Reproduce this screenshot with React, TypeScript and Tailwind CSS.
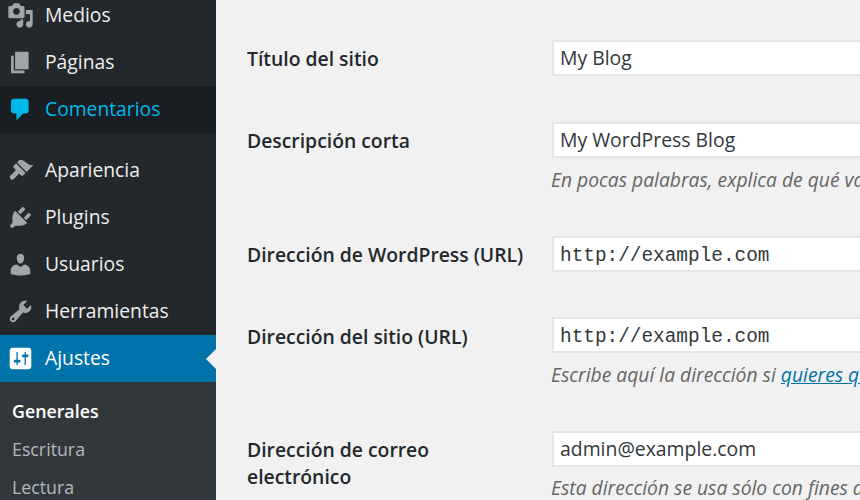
const FONT = "font-['Open_Sans','Noto_Sans',sans-serif]";

const ICONS: Record<string, string> = {
  media:
    "M13 11V4c0-.55-.45-1-1-1h-1.67L9 1H5L3.67 3H2c-.55 0-1 .45-1 1v7c0 .55.45 1 1 1h10c.55 0 1-.45 1-1zM7 4.5c1.38 0 2.5 1.12 2.5 2.5S8.38 9.5 7 9.5 4.5 8.38 4.5 7 5.62 4.5 7 4.5zM14 6h5v10.5c0 1.38-1.12 2.5-2.5 2.5S14 17.88 14 16.5s1.12-2.5 2.5-2.5c.17 0 .34.02.5.05V9h-3V6zm-4 8.05V13h2v3.5c0 1.38-1.12 2.5-2.5 2.5S7 17.88 7 16.5 8.12 14 9.5 14c.17 0 .34.02.5.05z",
  page: "M6 15V2h10v13H6zm-1 1h8v2H3V5h2v11z",
  comments: "M5 2h9c1.1 0 2 .9 2 2v7c0 1.1-.9 2-2 2h-2l-5 5v-5H5c-1.1 0-2-.9-2-2V4c0-1.1.9-2 2-2z",
  appearance:
    "M14.48 11.06L7.41 3.99l1.5-1.5c.5-.56 2.3-.47 3.51.32 1.21.8 1.43 1.28 2.91 2.1 1.18.64 2.45 1.26 4.45.85zm-.71.71L6.7 4.7 4.93 6.47c-.39.39-.39 1.02 0 1.41l1.06 1.06c.39.39.39 1.03 0 1.42l-3.4 3.4c-.69.69-.69 1.81 0 2.5.69.69 1.81.69 2.5 0l3.4-3.4c.3-.3.8-.3 1.1 0l.9.9c.39.39 1.02.39 1.41 0z",
  plugins:
    "M13.11 4.36L9.87 7.6 8 5.73l3.24-3.24c.35-.34 1.05-.2 1.56.32.52.51.66 1.21.31 1.55zm-8 1.77l.91-1.12 9.01 9.01-1.19.84c-.71.71-2.63 1.16-3.82 1.16H6.14L4.9 17.26c-.59.59-1.54.59-2.12 0-.59-.58-.59-1.53 0-2.12l1.24-1.24v-3.88c0-1.13.4-3.19 1.09-3.89zm7.26 3.97l3.24-3.24c.34-.35 1.04-.21 1.55.31.52.51.66 1.21.31 1.55l-3.24 3.25z",
  users:
    "M10 9.25c-2.27 0-2.73-3.44-2.73-3.44C7 4.02 7.82 2 9.97 2c2.16 0 2.98 2.02 2.71 3.81 0 0-.41 3.44-2.68 3.44zm0 2.57L12.72 10c2.39 0 4.52 2.33 4.52 4.53v2.49s-3.65 1.13-7.24 1.13c-3.65 0-7.24-1.13-7.24-1.13v-2.49c0-2.25 1.94-4.48 4.47-4.48z",
  tools:
    "M16.68 9.77c-1.34 1.34-3.3 1.67-4.95.99l-5.41 6.52c-.99.99-2.59.99-3.58 0s-.99-2.59 0-3.57l6.52-5.42c-.68-1.65-.35-3.61.99-4.95 1.28-1.28 3.12-1.62 4.72-1.06l-2.89 2.89 2.82 2.82 2.86-2.87c.53 1.58.18 3.39-1.08 4.65zM3.81 16.21c.4.39 1.04.39 1.43 0 .4-.4.4-1.04 0-1.43-.39-.4-1.03-.4-1.43 0-.39.39-.39 1.03 0 1.43z",
  settings:
    "M18 16V4c0-1.1-.9-2-2-2H4c-1.1 0-2 .9-2 2v12c0 1.1.9 2 2 2h12c1.1 0 2-.9 2-2zM8 11h1c.55 0 1 .45 1 1s-.45 1-1 1H8v1.5c0 .28-.22.5-.5.5s-.5-.22-.5-.5V13H6c-.55 0-1-.45-1-1s.45-1 1-1h1V5.5c0-.28.22-.5.5-.5s.5.22.5.5V11zm5-2h-1c-.55 0-1-.45-1-1s.45-1 1-1h1V5.5c0-.28.22-.5.5-.5s.5.22.5.5V7h1c.55 0 1 .45 1 1s-.45 1-1 1h-1v5.5c0 .28-.22.5-.5.5s-.5-.22-.5-.5V9z",
};

function MenuItem({ icon, label, state }: { icon: string; label: string; state?: "hover" | "current" }) {
  const rowClass =
    state === "current"
      ? "bg-[#0073aa] text-white"
      : state === "hover"
        ? "bg-[#191e23] text-[#00b9eb]"
        : "text-[#eeeeee]";
  const iconClass =
    state === "current" ? "text-white" : state === "hover" ? "text-[#00b9eb]" : "text-[#a0a5aa]";

  return (
    <li className={`relative flex h-[47px] items-center pl-[45px] text-[19.3px] ${rowClass}`}>
      <svg viewBox="0 0 20 20" className={`absolute left-[7px] top-[10px] h-[27px] w-[27px] fill-current ${iconClass}`}>
        <path fillRule="evenodd" d={ICONS[icon]} />
      </svg>
      {label}
      {state === "current" && (
        <span className="absolute right-0 top-[14px] border-y-[10px] border-r-[10px] border-y-transparent border-r-[#f1f1f1]" />
      )}
    </li>
  );
}

function Sidebar() {
  return (
    <aside className="h-full w-[216px] shrink-0 overflow-hidden bg-[#23282d]">
      <ul className="-mt-[8px]">
        <MenuItem icon="media" label="Medios" />
        <MenuItem icon="page" label="Páginas" />
        <MenuItem icon="comments" label="Comentarios" state="hover" />
      </ul>
      <ul className="mt-[14px]">
        <MenuItem icon="appearance" label="Apariencia" />
        <MenuItem icon="plugins" label="Plugins" />
        <MenuItem icon="users" label="Usuarios" />
        <MenuItem icon="tools" label="Herramientas" />
        <MenuItem icon="settings" label="Ajustes" state="current" />
      </ul>
      <ul className="flex h-[118px] flex-col gap-[12px] bg-[#32373c] pl-[12px] pt-[16px] text-[17.8px] leading-[26px] text-[#b4b9be]">
        <li className="font-semibold text-white">Generales</li>
        <li>Escritura</li>
        <li>Lectura</li>
      </ul>
    </aside>
  );
}

function Field({
  label,
  value,
  mono,
  className = "",
  labelClass = "pt-[5px] leading-[28px]",
  hintClass = "mt-[7px]",
  children,
}: {
  label: React.ReactNode;
  value: string;
  mono?: boolean;
  className?: string;
  labelClass?: string;
  hintClass?: string;
  children?: React.ReactNode;
}) {
  return (
    <div className={`flex ${className}`}>
      <label className={`w-[305px] shrink-0 text-[19.35px] font-semibold text-[#23282d] ${labelClass}`}>{label}</label>
      <div className="min-w-[400px] flex-1">
        <input
          readOnly
          value={value}
          className={`block h-[36px] w-[500px] border-2 border-[#e5e5e5] bg-white px-[6px] text-[19.4px] text-[#32373c] outline-none ${
            mono ? "pt-[4px] font-['Liberation_Mono',monospace]" : "pb-[1px]"
          }`}
        />
        {children && (
          <p className={`-ml-px whitespace-nowrap text-[19.3px] italic leading-[28px] text-[#666666] ${hintClass}`}>
            {children}
          </p>
        )}
      </div>
    </div>
  );
}

export default function App() {
  return (
    <div className={`flex h-[500px] w-[860px] overflow-hidden bg-[#f1f1f1] ${FONT}`}>
      <Sidebar />
      <main className="min-w-0 flex-1 overflow-hidden pl-[31px] pt-[40px]">
        <Field label="Título del sitio" value="My Blog" />
        <Field label="Descripción corta" value="My WordPress Blog" className="mt-[46px]" hintClass="mt-[8px]">
          En pocas palabras, explica de qué va este sitio.
        </Field>
        <Field label="Dirección de WordPress (URL)" value="http://example.com" mono className="mt-[42px]" />
        <Field
          label="Dirección del sitio (URL)"
          value="http://example.com"
          mono
          className="mt-[45px]"
          labelClass="pt-[6px] leading-[28px]"
          hintClass="mt-[8px]"
        >
          Escribe aquí la dirección si{" "}
          <a href="#" className="text-[#0073aa] underline">
            quieres que tu sitio
          </a>
        </Field>
        <Field
          label={
            <>
              Dirección de correo
              <br />
              electrónico
            </>
          }
          value="admin@example.com"
          className="mt-[42px]"
          labelClass="pt-[5px] leading-[27px]"
        >
          Esta dirección se usa sólo con fines de administración.
        </Field>
      </main>
    </div>
  );
}
